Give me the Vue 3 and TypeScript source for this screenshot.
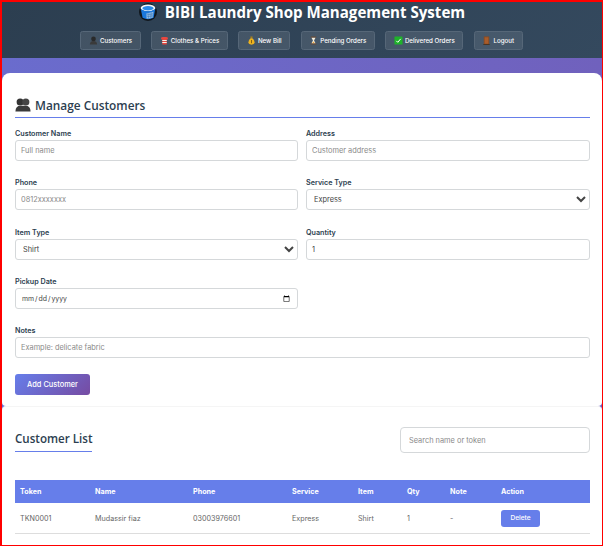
<template>
  <div class="page">
    <header class="top">
      <h1 class="brand">
        <svg class="logo" viewBox="0 0 18 18">
          <circle cx="9" cy="9" r="9" fill="#10161c" />
          <ellipse cx="9" cy="5" rx="7.4" ry="3.6" fill="#f2f6fa" />
          <ellipse cx="9" cy="5.2" rx="5.6" ry="2.2" fill="#2a8ae8" />
          <path d="M1.8 6 Q9 10.5 16.2 6 L14.6 14.8 Q9 17.6 3.6 14.8 Z" fill="#1b78dc" />
          <path d="M7.4 10.4 L14.4 8.8 L13.8 14.6 Q10.5 16 7.6 15.4 Z" fill="#9cc4ea" />
          <path d="M9 10 L9.6 15.6 M11 9.6 L11.4 15.4 M12.8 9.2 L12.8 14.8 M7.6 12 L14.2 10.8 M7.7 13.8 L14 12.8" stroke="#2c6cb0" stroke-width=".5" />
        </svg>
        BIBI Laundry Shop Management System
      </h1>
      <nav class="nav">
        <a class="nav-btn">
          <svg viewBox="0 0 10 10"><circle cx="5" cy="3.2" r="2.6" fill="#2a2a2a" /><path d="M1 9.5 Q1 5.5 5 5.5 Q9 5.5 9 9.5 Z" fill="#3a3a3a" /></svg>
          Customers
        </a>
        <a class="nav-btn">
          <svg viewBox="0 0 10 10"><path d="M1 2 L3 1 H7 L9 2 L8.4 4 L7.5 3.8 V9.4 H2.5 V3.8 L1.6 4 Z" fill="#e8473f" /><path d="M2.5 4.4 H7.5 V5.6 H2.5 Z M2.5 6.8 H7.5 V7.8 H2.5 Z" fill="#f6f0ea" /></svg>
          Clothes &amp; Prices
        </a>
        <a class="nav-btn">
          <svg viewBox="0 0 10 10"><path d="M3.6 .6 H6.4 L5.8 2.6 H4.2 Z" fill="#a8801c" /><path d="M4 2.6 H6 Q9 5 8.6 7.6 Q8 9.6 5 9.6 Q2 9.6 1.4 7.6 Q1 5 4 2.6 Z" fill="#eeb31f" /><path d="M5 4.4 V8" stroke="#7b5a10" stroke-width="1" /></svg>
          New Bill
        </a>
        <a class="nav-btn">
          <svg viewBox="0 0 10 10"><path d="M2 .6 H8 V2 H2 Z M2 8 H8 V9.4 H2 Z" fill="#6b4a32" /><path d="M2.8 2 H7.2 L5.6 5 L7.2 8 H2.8 L4.4 5 Z" fill="#f5efe0" /><path d="M3.6 7.8 L5 6 L6.4 7.8 Z" fill="#eda23a" /></svg>
          Pending Orders
        </a>
        <a class="nav-btn">
          <svg viewBox="0 0 10 10"><rect x=".5" y=".5" width="9" height="9" rx=".6" fill="#1fb32a" /><path d="M2.6 5.4 L4.2 7 L7.4 3.2" fill="none" stroke="#fff" stroke-width="1.1" /></svg>
          Delivered Orders
        </a>
        <a class="nav-btn">
          <svg viewBox="0 0 10 10"><rect x="2" y=".5" width="6" height="9" fill="#8a4b22" /><rect x="3" y="1.5" width="4" height="7" fill="#a85c2c" /><rect x="1.4" y="9" width="7.2" height=".8" fill="#3d2a1a" /></svg>
          Logout
        </a>
      </nav>
    </header>

    <main class="main">
      <section class="card form-card">
        <h2 class="title">
          <svg class="people" viewBox="0 0 16 14">
            <circle cx="5.2" cy="4" r="3.6" fill="#333" />
            <circle cx="10.8" cy="4" r="3.6" fill="#444" />
            <path d="M.4 13.6 Q.6 7.8 5.4 7.8 H10.6 Q15.4 7.8 15.6 13.6 Z" fill="#3a3a3a" />
          </svg>
          Manage Customers
        </h2>
        <form class="form" @submit.prevent>
          <div class="field">
            <label>Customer Name</label>
            <input type="text" placeholder="Full name" />
          </div>
          <div class="field">
            <label>Address</label>
            <input type="text" placeholder="Customer address" />
          </div>
          <div class="field">
            <label>Phone</label>
            <input type="text" placeholder="0812xxxxxxx" />
          </div>
          <div class="field">
            <label>Service Type</label>
            <select>
              <option>Express</option>
              <option>Regular</option>
            </select>
          </div>
          <div class="field">
            <label>Item Type</label>
            <select>
              <option>Shirt</option>
              <option>Pants</option>
            </select>
          </div>
          <div class="field">
            <label>Quantity</label>
            <input type="number" value="1" />
          </div>
          <div class="field">
            <label>Pickup Date</label>
            <input class="date" type="date" />
          </div>
          <div class="field wide">
            <label>Notes</label>
            <input type="text" placeholder="Example: delicate fabric" />
          </div>
          <button class="add-btn" type="submit">Add Customer</button>
        </form>
      </section>

      <section class="card list-card">
        <div class="list-head">
          <h2 class="title list-title">Customer List</h2>
          <input class="search" type="text" placeholder="Search name or token" />
        </div>
        <table class="table">
          <colgroup>
            <col v-for="c in columns" :key="c.label" :class="c.cls" />
          </colgroup>
          <thead>
            <tr>
              <th v-for="c in columns" :key="c.label">{{ c.label }}</th>
            </tr>
          </thead>
          <tbody>
            <tr v-for="row in rows" :key="row.token">
              <td>{{ row.token }}</td>
              <td>{{ row.name }}</td>
              <td>{{ row.phone }}</td>
              <td>{{ row.service }}</td>
              <td>{{ row.item }}</td>
              <td>{{ row.qty }}</td>
              <td>{{ row.note }}</td>
              <td><button class="del-btn" type="button">Delete</button></td>
            </tr>
          </tbody>
        </table>
      </section>
    </main>
  </div>
</template>

<script setup lang="ts">
const columns = [
  { label: 'Token', cls: 'c-token' },
  { label: 'Name', cls: 'c-name' },
  { label: 'Phone', cls: 'c-phone' },
  { label: 'Service', cls: 'c-service' },
  { label: 'Item', cls: 'c-item' },
  { label: 'Qty', cls: 'c-qty' },
  { label: 'Note', cls: 'c-note' },
  { label: 'Action', cls: 'c-action' },
]

const rows = [
  {
    token: 'TKN0001',
    name: 'Mudassir fiaz',
    phone: '03003976601',
    service: 'Express',
    item: 'Shirt',
    qty: 1,
    note: '-',
  },
]
</script>

<style>
html,
body {
  margin: 0;
  overflow: hidden;
}
</style>

<style scoped>
.page {
  box-sizing: border-box;
  height: 546px;
  overflow: hidden;
  border: 1px solid #f00;
  border-left-width: 2px;
  border-top-width: 2px;
  background: linear-gradient(90deg, #6a6ccd, #7061bd);
  font-family: Inter, "Liberation Sans", sans-serif;
  color: #333;
}
.top {
  height: 56px;
  box-sizing: border-box;
  background: linear-gradient(135deg, #2c3e50, #34495e);
  text-align: center;
}
.brand {
  margin: 0;
  height: 22px;
  display: flex;
  justify-content: center;
  align-items: center;
  gap: 8px;
  font: 700 15.1px/20px "Open Sans", "Noto Sans", sans-serif;
  color: #fff;
  transform: translateY(-1px);
}
.logo {
  width: 18px;
  height: 18px;
}
.nav {
  display: flex;
  justify-content: center;
  gap: 10.6px;
  margin-top: 7px;
  padding-right: 1px;
}
.nav-btn {
  box-sizing: border-box;
  height: 19px;
  display: flex;
  align-items: center;
  gap: 2px;
  padding: 0 7.5px;
  border: 1px solid #566778;
  border-radius: 2.5px;
  background: rgba(255, 255, 255, 0.1);
  color: #fff;
  font-size: 6.2px;
  font-weight: 500;
}
.nav-btn svg {
  width: 9px;
  height: 9px;
}
.main {
  padding-top: 15px;
}
.card {
  background: #fff;
}
.form-card {
  height: 333px;
  box-sizing: border-box;
  padding: 22px 12px 0 13px;
  border-radius: 8px 8px 4px 4px;
}
.title {
  margin: 0;
  display: flex;
  align-items: center;
  gap: 4px;
  height: 20px;
  padding-bottom: 2px;
  border-bottom: 1px solid #667eea;
  font: 600 11.85px/16px "Open Sans", "Noto Sans", sans-serif;
  color: #2c3e50;
}
.people {
  width: 16px;
  height: 14px;
}
.form {
  display: grid;
  grid-template-columns: 283px 284px;
  column-gap: 8px;
  margin-top: 11px;
}
.field {
  height: 49.3px;
  display: flex;
  flex-direction: column;
}
.wide {
  grid-column: 1 / 3;
}
.field:nth-child(7) {
  grid-column: 1;
}
.field label {
  height: 10px;
  margin-bottom: 1px;
  font-size: 7.2px;
  line-height: 10px;
  font-weight: 600;
  color: #2c3e50;
}
input,
select {
  box-sizing: border-box;
  height: 21px;
  width: 100%;
  margin: 0;
  padding: 0 5px;
  border: 1px solid #d5d8da;
  border-radius: 3px;
  background-color: #fff;
  font-family: Inter, "Liberation Sans", sans-serif;
  font-size: 7.4px;
  color: #444;
  outline: none;
}
select {
  padding: 0 3px;
}
input::placeholder {
  color: #8a8a8a;
}
.date {
  font-size: 6.9px;
}
.add-btn {
  grid-column: 1;
  justify-self: start;
  width: 75px;
  height: 21px;
  margin-top: -1px;
  padding: 0;
  border: none;
  border-radius: 3px;
  background: linear-gradient(135deg, #667eea, #764ba2);
  color: #fff;
  font-family: Inter, "Liberation Sans", sans-serif;
  font-size: 7.4px;
  font-weight: 500;
}
.list-card {
  height: 145px;
  box-sizing: border-box;
  padding: 20px 12px 0 13px;
  border-top: 1px solid #f5f5f5;
  border-radius: 4px 4px 0 0;
}
.list-head {
  display: flex;
  justify-content: space-between;
  align-items: flex-start;
}
.list-title {
  display: inline-block;
  box-sizing: border-box;
  margin-top: 1px;
  padding-bottom: 0;
  line-height: 22px;
  height: 24px;
  width: 77px;
  font-size: 11.6px;
  white-space: nowrap;
}
.search {
  width: 190px;
  height: 26px;
  padding: 0 8px;
  border-radius: 4px;
}
.table {
  width: 575px;
  margin-top: 27px;
  table-layout: fixed;
  border-collapse: collapse;
  font-size: 7.2px;
}
.c-token { width: 75px; }
.c-name { width: 98px; }
.c-phone { width: 99px; }
.c-service { width: 66px; }
.c-item { width: 49px; }
.c-qty { width: 43px; }
.c-note { width: 51px; }
.c-action { width: 94px; }
.table th {
  height: 23px;
  padding: 0 5px;
  background: #667eea;
  color: #fff;
  font-weight: 700;
  text-align: left;
}
.table td {
  height: 30px;
  padding: 0 5px;
  border-bottom: 1px solid #ddd;
  color: #666;
}
.del-btn {
  display: block;
  width: 39px;
  height: 17px;
  padding: 0;
  border: none;
  border-radius: 3px;
  background: #667eea;
  color: #fff;
  font-family: Inter, "Liberation Sans", sans-serif;
  font-size: 6.6px;
  font-weight: 500;
}
</style>
